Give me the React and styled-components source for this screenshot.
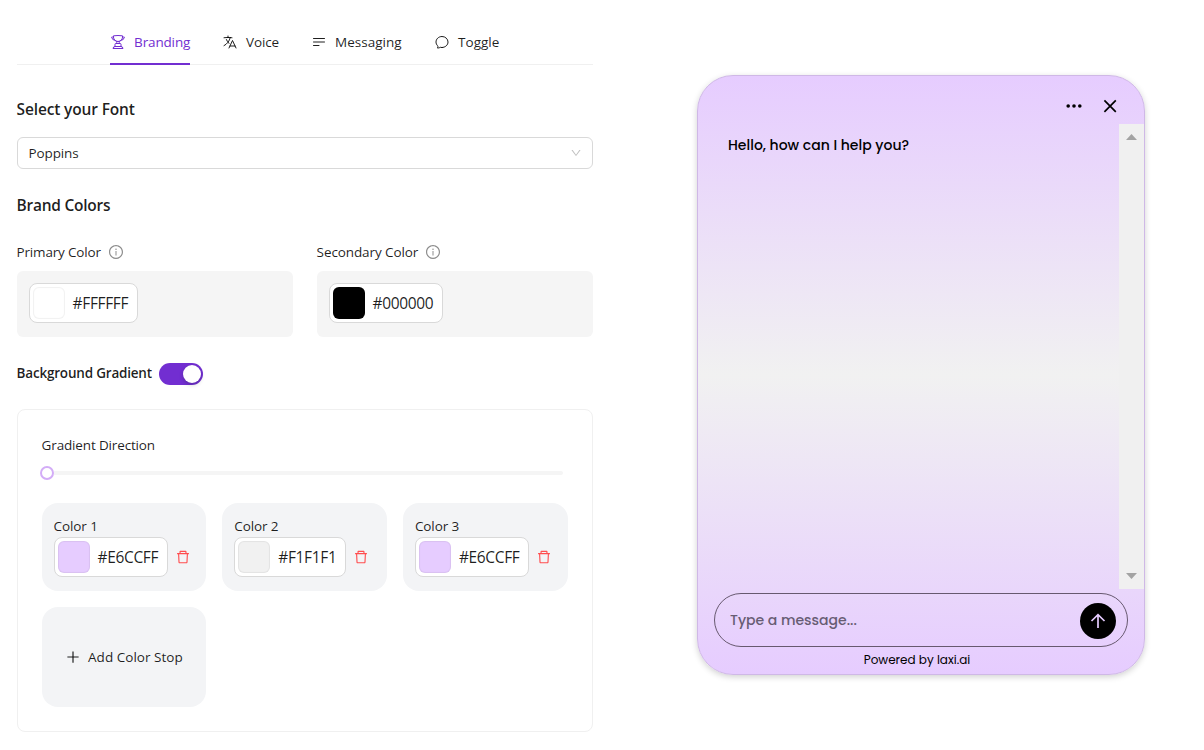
import React from 'react';
import styled, { createGlobalStyle } from 'styled-components';
import {
  AiOutlineInfoCircle, AiOutlineDelete, AiOutlinePlus, AiOutlineDown,
} from 'react-icons/ai';
import {
  HiOutlineTrophy, HiOutlineLanguage, HiOutlineBars3BottomLeft, HiOutlineChatBubbleOvalLeft,
} from 'react-icons/hi2';

const Global = createGlobalStyle`
  *, *::before, *::after { box-sizing: border-box; }
  body {
    margin: 0;
    background: #fff;
    color: rgba(0, 0, 0, 0.88);
    font-family: "Segoe UI", "Open Sans", "Noto Sans", sans-serif;
    font-size: 13.5px;
    line-height: 22px;
  }
`;

const Page = styled.div`
  display: flex;
  align-items: flex-start;
  width: 1204px;
  height: 750px;
  overflow: hidden;
  padding-left: 16.6px;
`;

const Settings = styled.main`
  width: 576px;
  flex: none;
`;

const Label = styled.span`
  display: block;
  white-space: nowrap;
  line-height: 22px;
  letter-spacing: ${p => p.$spacing || 0}px;
`;

const Tabs = styled.nav`
  display: flex;
  justify-content: center;
  gap: 32px;
  height: 65px;
  padding: 20px 0 0 0;
  border-bottom: 1px solid #f0f0f0;
`;

const Tab = styled.div`
  display: flex;
  align-items: flex-start;
  gap: 8px;
  width: ${p => p.$width}px;
  height: 45px;
  padding-top: 11px;
  color: ${p => (p.$active ? '#722ed1' : 'inherit')};
  border-bottom: 2px solid ${p => (p.$active ? '#722ed1' : 'transparent')};
  svg { flex: none; margin-top: 3px; }
`;

const Heading = styled.h2`
  margin: ${p => p.$top}px 0 0;
  font-size: 15.5px;
  font-weight: 600;
  line-height: 24px;
  white-space: nowrap;
  letter-spacing: ${p => p.$spacing}px;
`;

const Select = styled.div`
  display: flex;
  align-items: center;
  justify-content: space-between;
  height: 32px;
  margin-top: 16px;
  padding: 0 10px 0 11px;
  border: 1px solid #d9d9d9;
  border-radius: 6px;
  svg { color: rgba(0, 0, 0, 0.25); }
`;

const Columns = styled.div`
  display: grid;
  grid-template-columns: 1fr 1fr;
  gap: 24px;
  margin-top: 24px;
`;

const FieldLabel = styled.div`
  display: flex;
  align-items: center;
  gap: 7px;
  height: 22px;
  svg { color: rgba(0, 0, 0, 0.45); }
`;

const Well = styled.div`
  height: 66px;
  margin-top: 8px;
  padding: 12px;
  border-radius: 6px;
  background: #f5f5f5;
`;

const PickerBox = styled.div`
  display: flex;
  align-items: center;
  gap: 8px;
  flex: none;
  width: ${p => p.$width}px;
  height: 40px;
  padding: 3px;
  border: 1px solid #d9d9d9;
  border-radius: 8px;
  background: #fff;
  font-size: 15.5px;
`;

const Swatch = styled.span`
  flex: none;
  width: 32px;
  height: 32px;
  border-radius: 6px;
  background: ${p => p.$color};
  box-shadow: inset 0 0 1px 1px rgba(0, 0, 0, 0.06);
`;

const ToggleRow = styled.div`
  display: flex;
  align-items: center;
  gap: 7px;
  height: 22px;
  margin-top: 26px;
  font-weight: 600;
`;

const ToggleLabel = styled(Label)`
  width: 135.400px;
  margin-top: -2px;
`;

const Switch = styled.span`
  display: flex;
  justify-content: flex-end;
  width: 44px;
  height: 22px;
  padding: 2px;
  border-radius: 11px;
  background: #722ed1;
  &::after {
    content: "";
    width: 18px;
    height: 18px;
    border-radius: 50%;
    background: #fff;
    box-shadow: 0 2px 4px rgba(0, 35, 11, 0.2);
  }
`;

const GradientCard = styled.section`
  height: 323px;
  margin-top: 24px;
  padding: 24px;
  border: 1px solid #f0f0f0;
  border-radius: 8px;
`;

const Slider = styled.div`
  display: flex;
  align-items: center;
  height: 14px;
  margin: 10px 5px 0 -2px;
`;

const Handle = styled.span`
  flex: none;
  width: 14px;
  height: 14px;
  border: 2px solid #d3adf7;
  border-radius: 50%;
  background: #fff;
`;

const Rail = styled.span`
  flex: 1;
  height: 4px;
  border-radius: 0 2px 2px 0;
  background: #f5f5f5;
`;

const Stops = styled.div`
  display: grid;
  grid-template-columns: repeat(3, 1fr);
  grid-template-rows: 88px 100px;
  gap: 16px;
  margin-top: 23px;
`;

const StopCard = styled.div`
  padding: 12px;
  border-radius: 16px;
  background: #f3f4f6;
`;

const StopRow = styled.div`
  display: flex;
  align-items: center;
  gap: 7px;
  svg { color: #ff4d4f; }
`;

const AddStop = styled.button`
  display: flex;
  align-items: center;
  justify-content: center;
  gap: 7px;
  padding: 0;
  border: 0;
  border-radius: 16px;
  background: #f3f4f6;
  color: inherit;
  font: inherit;
`;

const Chat = styled.section`
  display: flex;
  flex-direction: column;
  flex: none;
  width: 448px;
  height: 600px;
  margin: 75px 0 0 104.4px;
  border: 1px solid #cfb8e6;
  border-radius: 36px;
  background: linear-gradient(#e6ccff, #f1f1f1 50%, #e6ccff);
  box-shadow: 0 2px 6px rgba(0, 0, 0, 0.18);
  color: #000;
  font-family: Poppins, "Open Sans", sans-serif;
  font-weight: 500;
`;

const ChatHeader = styled.header`
  display: flex;
  align-items: center;
  justify-content: flex-end;
  gap: 20px;
  height: 48px;
  padding: 12px 26px 0 0;
`;

const Messages = styled.div`
  display: flex;
  justify-content: space-between;
  height: 465px;
  padding-left: 30px;
`;

const Greeting = styled(Label)`
  margin-top: 10px;
  font-size: 14px;
`;

const Scrollbar = styled.div`
  display: flex;
  flex-direction: column;
  align-items: center;
  justify-content: space-between;
  width: 25px;
  padding: 10px 0;
  background: #f0f0f0;
`;

const Composer = styled.div`
  display: flex;
  align-items: center;
  justify-content: space-between;
  height: 54px;
  margin: 4px 16px 0;
  padding: 0 11px 0 15px;
  border: 1px solid #67596f;
  border-radius: 27px;
  color: #675c73;
  font-size: 14px;
`;

const Send = styled.span`
  display: flex;
  align-items: center;
  justify-content: center;
  width: 36px;
  height: 36px;
  margin-top: 2px;
  border-radius: 50%;
  background: #000;
`;

const Powered = styled.footer`
  display: flex;
  justify-content: center;
  margin: 2px 8px 0 0;
  font-size: 12px;
  font-weight: 400;
`;

const DotsIcon = () => (
  <svg width="16" height="16" viewBox="0 0 16 16" fill="#000">
    <circle cx="2.200" cy="8" r="1.800" /><circle cx="8" cy="8" r="1.800" /><circle cx="13.800" cy="8" r="1.800" />
  </svg>
);

const CloseIcon = () => (
  <svg width="16" height="16" viewBox="0 0 16 16" stroke="#000" strokeWidth="1.7">
    <path d="M2.4 2.4l11.4 11.4M13.8 2.4L2.4 13.8" />
  </svg>
);

const ArrowIcon = () => (
  <svg width="16" height="16" viewBox="0 0 16 16" fill="none" stroke="#e6ccff" strokeWidth="1.7">
    <path d="M8 15V2M1.5 8L8 1.7 14.500 8" />
  </svg>
);

const Caret = ({ down }) => (
  <svg width="11" height="6" viewBox="0 0 11 6" fill="#a3a3a3">
    <path d={down ? 'M0 0h11L5.500 6z' : 'M0 6h11L5.500 0z'} />
  </svg>
);

const ColorPicker = ({ color, width, spacing }) => (
  <PickerBox $width={width}>
    <Swatch $color={color} />
    <Label $spacing={spacing}>{color}</Label>
  </PickerBox>
);

const stops = [
  { color: '#E6CCFF', width: 114, spacing: -0.35 },
  { color: '#F1F1F1', width: 112, spacing: -0.35 },
  { color: '#E6CCFF', width: 114, spacing: -0.35 },
];

export default function App() {
  return (
    <>
      <Global />
      <Page>
        <Settings>
          <Tabs>
            <Tab $active $width={80}><HiOutlineTrophy size={16} /><Label $spacing={-0.15}>Branding</Label></Tab>
            <Tab $width={57}><HiOutlineLanguage size={16} /><Label $spacing={-0.15}>Voice</Label></Tab>
            <Tab $width={91}><HiOutlineBars3BottomLeft size={16} /><Label $spacing={0}>Messaging</Label></Tab>
            <Tab $width={65}><HiOutlineChatBubbleOvalLeft size={16} /><Label $spacing={0}>Toggle</Label></Tab>
          </Tabs>

          <Heading $top={32} $spacing={-0.15}>Select your Font</Heading>
          <Select><Label $spacing={-0.15}>Poppins</Label><AiOutlineDown size={12} /></Select>

          <Heading $top={24} $spacing={-0.25}>Brand Colors</Heading>
          <Columns>
            <div>
              <FieldLabel><Label $spacing={-0.18}>Primary Color</Label><AiOutlineInfoCircle size={16} /></FieldLabel>
              <Well><ColorPicker color="#FFFFFF" width={109} spacing={-0.35} /></Well>
            </div>
            <div>
              <FieldLabel><Label $spacing={-0.1}>Secondary Color</Label><AiOutlineInfoCircle size={16} /></FieldLabel>
              <Well><ColorPicker color="#000000" width={114} spacing={-0.35} /></Well>
            </div>
          </Columns>

          <ToggleRow><ToggleLabel $spacing={-0.2}>Background Gradient</ToggleLabel><Switch /></ToggleRow>

          <GradientCard>
            <Label $spacing={-0.15}>Gradient Direction</Label>
            <Slider><Handle /><Rail /></Slider>
            <Stops>
              {stops.map((stop, i) => (
                <StopCard key={i}>
                  <Label $spacing={-0.1}>Color {i + 1}</Label>
                  <StopRow><ColorPicker {...stop} /><AiOutlineDelete size={16} /></StopRow>
                </StopCard>
              ))}
              <AddStop><AiOutlinePlus size={16} /><Label $spacing={0.03}>Add Color Stop</Label></AddStop>
            </Stops>
          </GradientCard>
        </Settings>

        <Chat>
          <ChatHeader><DotsIcon /><CloseIcon /></ChatHeader>
          <Messages>
            <Greeting $spacing={0}>Hello, how can I help you?</Greeting>
            <Scrollbar><Caret /><Caret down /></Scrollbar>
          </Messages>
          <Composer><Label $spacing={0}>Type a message...</Label><Send><ArrowIcon /></Send></Composer>
          <Powered><Label $spacing={0}>Powered by laxi.ai</Label></Powered>
        </Chat>
      </Page>
    </>
  );
}
